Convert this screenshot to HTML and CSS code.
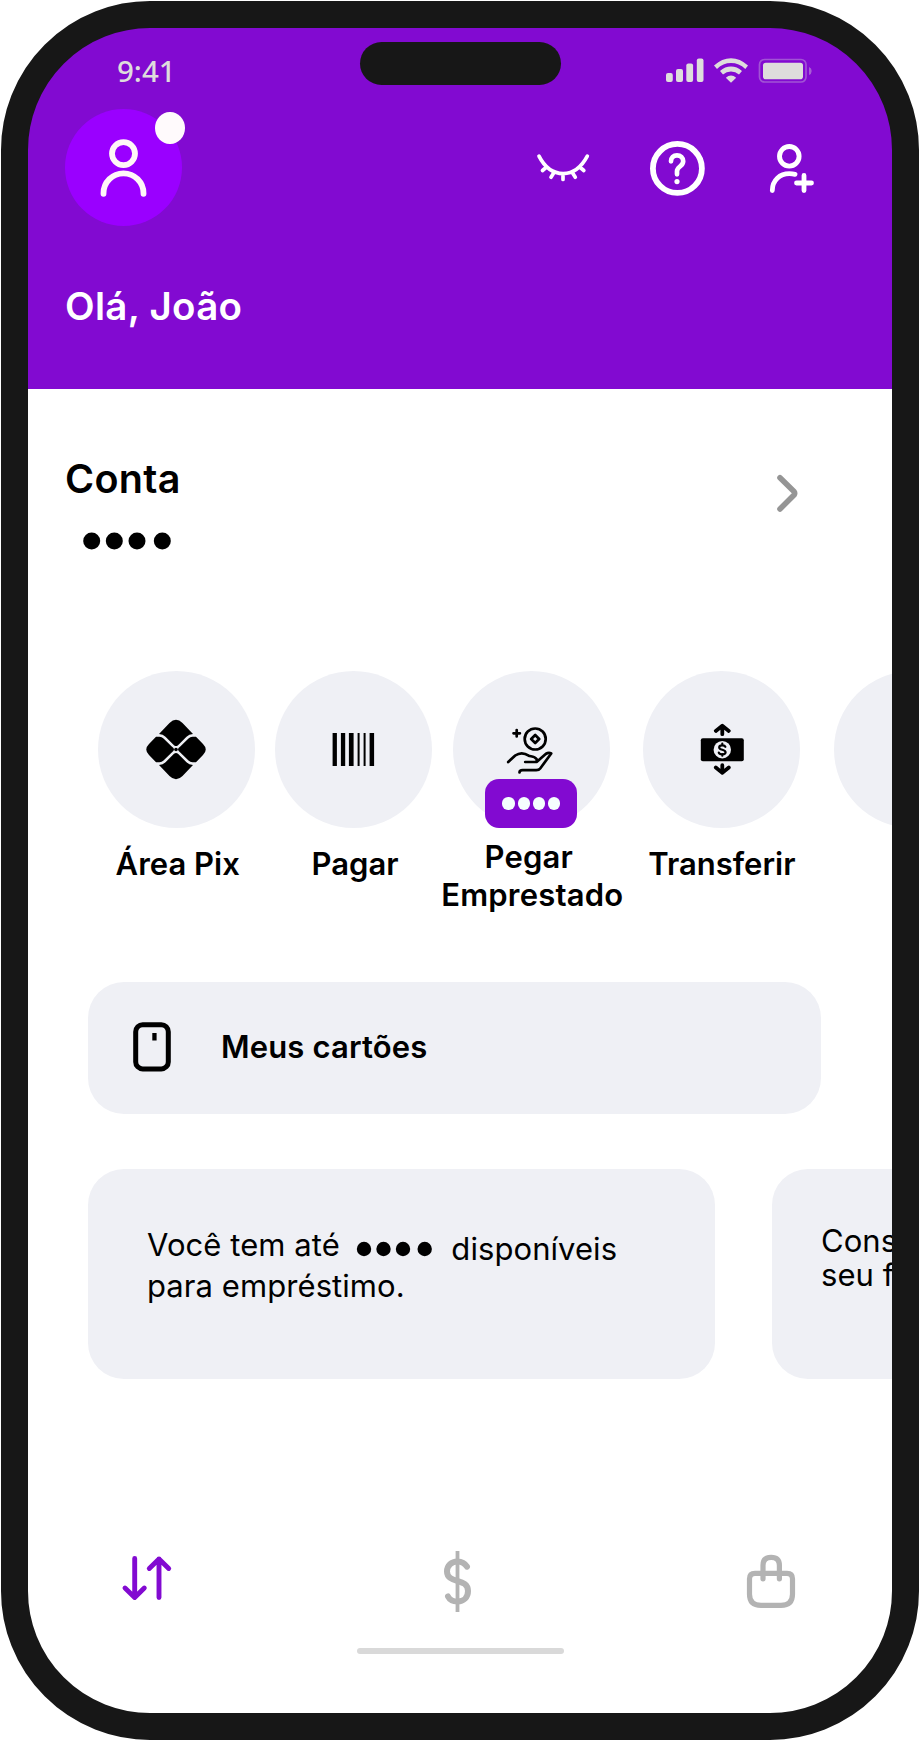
FILE: index.html
```html
<!DOCTYPE html>
<html lang="pt-BR">
<head>
<meta charset="utf-8">
<title>Conta</title>
<link rel="stylesheet" href="styles.css">
</head>
<body>
<main class="phone">
  <header class="header">
    <div class="status">
      <span class="time">9:41</span>
      <span class="island"></span>
      <svg class="signals" width="148" height="28" viewBox="665 57 148 28" fill="#dedddc">
        <rect x="666" y="73" width="6.8" height="9" rx="2"/><rect x="676" y="69" width="7" height="13" rx="2"/><rect x="686.3" y="63.5" width="6.8" height="18.5" rx="2"/><rect x="696.8" y="58.5" width="6.7" height="23.5" rx="2"/>
        <path d="M714 65.5Q722 58.2 731 58.2T748 65.5L745.3 69Q739 63.1 731 63.1T717 69Z"/>
        <path d="M720 71Q725 66.6 731 66.6T742 71L739 74.6Q735.5 71.5 731 71.5T723 74.6Z"/>
        <path d="M725.8 77.7Q731 73.2 736.2 77.7L731 82.8Z"/>
        <rect x="759.5" y="59.5" width="46.5" height="22.5" rx="5" fill="none" stroke="#dedddc" stroke-opacity=".35" stroke-width="1.7"/>
        <rect x="763" y="62.8" width="40" height="16.4" rx="2.8"/>
        <path d="M809 67Q811.7 68 811.7 71T809 75Z" opacity=".4"/>
      </svg>
    </div>
    <div class="actions">
      <div class="avatar">
        <svg width="60" height="60" viewBox="93.8 137.7 60 60" fill="none" stroke="#fff7f7" stroke-width="5.8" stroke-linecap="round"><circle cx="123.3" cy="153.3" r="11.5"/><path d="M103.3 193.5V193A20 20 0 0 1 143.3 193V193.5"/></svg>
        <span class="notice"></span>
      </div>
      <svg class="tools" width="280" height="60" viewBox="535 138 280 60" fill="none" stroke="#fff" stroke-linecap="round" stroke-linejoin="round">
        <path stroke-width="3.7" d="M539 156.2C545 168 554 173.6 563.2 173.6S581 168 587.3 156.2M563 174V179.5M554 172.5L551 177.3M546 167.5L542.5 170.5M572.3 172.5L575.3 177.3M580.3 167.5L583.8 170.5"/>
        <circle cx="677.4" cy="168.4" r="24.5" stroke-width="5.8"/>
        <path stroke-width="4.7" d="M671 161.3C671 157.5 673.5 155.3 677 155.3S683.2 157.8 683.2 161.3C683.2 166.5 677 166.5 677 171.2V174.3"/>
        <circle cx="677" cy="181.6" r="2.6" fill="#fff" stroke="none"/>
        <circle cx="789.3" cy="156.3" r="9.8" stroke-width="4.9"/>
        <path stroke-width="4.8" d="M772.3 190.5C772.3 180 780 173.7 789.3 173.7Q792.5 173.7 795 174.4M796.5 183H811.5M804 175.5V190.5"/>
      </svg>
    </div>
    <h1 class="greeting">Olá, João</h1>
  </header>

  <section class="account">
    <div>
      <h2 class="title">Conta</h2>
      <svg class="mask" width="90" height="18" viewBox="82 532.3 90 18"><circle cx="91.7" cy="541.3" r="8.5"/><circle cx="114.3" cy="541.3" r="8.5"/><circle cx="137" cy="541.3" r="8.5"/><circle cx="162.3" cy="541.3" r="8.5"/></svg>
    </div>
    <svg class="chevron" width="26" height="42" viewBox="774 472 26 42" fill="none" stroke="#959595" stroke-width="5.6" stroke-linecap="round" stroke-linejoin="round"><path d="M780 477.7L794 491.5Q795.3 493.2 794 495L780 509"/></svg>
  </section>

  <nav class="shortcuts">
    <div class="shortcut">
      <div class="disc"><svg width="62" height="62" viewBox="-31 -30.5 62 62"><path d="M-17 -15.5L-6.5 -26.5Q0 -33 6.5 -26.5L17 -15.5Q13 -15.2 10.5 -12.7L2 -4.3Q0 -2.5 -2 -4.3L-10.5 -12.7Q-13 -15.2 -17 -15.5ZM-17 15.5L-6.5 26.5Q0 33 6.5 26.5L17 15.5Q13 15.2 10.5 12.7L2 4.3Q0 2.5 -2 4.3L-10.5 12.7Q-13 15.2 -17 15.5ZM-20 -12.8H-16.5Q-14.2 -12.8 -12.5 -11L-4 -2.7Q0 0 -4 2.7L-12.5 11Q-14.2 12.8 -16.5 12.8H-20L-27 5.5Q-32.5 0 -27 -5.5ZM20 -12.8H16.5Q14.2 -12.8 12.5 -11L4 -2.7Q0 0 4 2.7L12.5 11Q14.2 12.8 16.5 12.8H20L27 5.5Q32.5 0 27 -5.5Z"/><circle r="1.8"/></svg></div>
      <span class="label nudge">Área Pix</span>
    </div>
    <div class="shortcut">
      <div class="disc"><svg width="42" height="34" viewBox="332.4 733 42 34"><path d="M333 733h4.3v33h-4.3zM341.3 733h4.3v33h-4.3zM349.3 733h4.7v33h-4.7zM358 733h2v33h-2zM364 733h2v33h-2zM370 733h4.5v33h-4.5z"/></svg></div>
      <span class="label nudge">Pagar</span>
    </div>
    <div class="shortcut borrow">
      <div class="disc"><svg width="50" height="50" viewBox="505.8 724.5 50 50" fill="none" stroke="#000" stroke-width="2.7" stroke-linecap="round" stroke-linejoin="round"><circle cx="535" cy="738.5" r="10.5"/><path d="M535 734.5L539 738.5L535 742.5L531 738.5ZM516.5 729.5V736M513.3 732.8H519.7M508 761.5L515 755C520 751.5 525 752.8 528.5 755.2C530.5 756.2 534 755 536.5 758.8V761.5H525M537 761L545.5 753.5Q548.5 751.6 551 753L540 768Q538.8 769.7 536 769.7H522.5Q519.3 769.7 519.3 772"/></svg>
        <span class="badge"><i></i><i></i><i></i><i></i></span></div>
      <span class="label two"><span class="first-line">Pegar</span><br>Emprestado</span>
    </div>
    <div class="shortcut transfer">
      <div class="disc"><svg width="44" height="54" viewBox="700.2 723.8 44 54"><rect x="701" y="739" width="43" height="23" rx="2"/><circle cx="722.5" cy="750.5" r="8.7" fill="#eff0f5"/><path fill="none" stroke="#000" stroke-width="3.8" stroke-linecap="round" stroke-linejoin="round" d="M716 731.7L722.5 726.5L729 731.7M722.5 728V735M716 768.3L722.5 773.7L729 768.3M722.5 772V766"/><path fill="none" stroke="#000" stroke-width="2.2" stroke-linecap="round" d="M725.6 747.6C725 745.8 719.4 745.6 719.4 748.2C719.4 751.2 725.8 749.8 725.8 753C725.8 755.8 719.6 755.6 719 753.4M722.5 744.5V746M722.5 755V756.5"/></svg></div>
      <span class="label">Transferir</span>
    </div>
    <div class="shortcut last"><div class="disc"></div></div>
  </nav>

  <section class="cards">
    <svg width="38" height="50" viewBox="0 0 38 50"><rect x="2.7" y="2.7" width="32.6" height="44.2" rx="7" fill="none" stroke="#000" stroke-width="5"/><path d="M19.3 11h4.3v7.5h-4.3z"/></svg>
    <span class="cards-name">Meus cartões</span>
  </section>

  <section class="offers">
    <article class="offer">
      <p class="row"><span>Você tem até</span><svg width="76" height="16" viewBox="356 1241 76 16"><circle cx="364" cy="1249" r="7.2"/><circle cx="383.5" cy="1249" r="7.2"/><circle cx="403" cy="1249" r="7.2"/><circle cx="424.7" cy="1249" r="7.2"/></svg><span class="available">disponíveis</span></p>
      <p class="row second">para empréstimo.</p>
    </article>
    <article class="offer next"><p>Cons</p><p>seu f</p></article>
  </section>

  <footer class="tabs">
    <svg class="tab-swap" width="54" height="50" viewBox="120 1553 54 50" fill="none" stroke="#820ad1" stroke-width="4.9" stroke-linecap="round" stroke-linejoin="round"><path d="M134.7 1558.5V1597.5M125 1588L134.7 1597.5L144.3 1588M159 1597.5V1559M149.3 1568.5L159 1559L168.7 1568.5"/></svg>
    <svg class="tab-money" width="30" height="62" viewBox="443 1551 30 62" fill="none" stroke="#b3b3b3" stroke-width="6" stroke-linecap="round"><path d="M467 1566.7C465 1563.5 461.5 1561.5 457.5 1561.5C451.5 1561.5 447 1565.5 447 1571.5C447 1584 468 1577.5 468 1591C468 1597.5 463.5 1601.5 457.5 1601.5C453 1601.5 449.5 1599.5 448 1596.5"/><path stroke-width="3.8" stroke-linecap="butt" d="M457.5 1551V1612"/></svg>
    <svg class="tab-bag" width="50" height="56" viewBox="746 1553.7 50 56" fill="none" stroke="#b3b3b3" stroke-width="5.2" stroke-linecap="round"><path d="M755 1573H787Q792.5 1573 792.5 1578.5V1594Q792.5 1605 781 1605H761Q749.5 1605 749.5 1594V1578.5Q749.5 1573 755 1573ZM763 1578.5V1565Q763 1557 771.2 1557T779.4 1565V1578.5"/></svg>
  </footer>
  <div class="home"></div>
</main>
</body>
</html>
```
FILE: styles.css
```css
* { box-sizing: border-box; }
body { margin: 0; background: #fff; font-family: Inter, "Liberation Sans", sans-serif; color: #000; }
svg { display: block; flex: none; overflow: visible; }
h1, h2, p { margin: 0; white-space: nowrap; }
.phone { width: 918px; height: 1739px; margin: 1px 0 0 1px; border: 27px solid #171717; border-radius: 149px; background: linear-gradient(#820ad1 361px, #fff 361px); overflow: hidden; }
.header { height: 361px; }
.status { height: 81px; display: flex; padding: 14px 0 0 89px; }
.time { width: 243px; flex: none; margin-top: 8px; font: 500 29.5px/41px "Noto Sans", sans-serif; color: #dedddc; }
.island { width: 201px; flex: none; height: 43px; border-radius: 22px; background: #171717; }
.signals { margin: 15px 0 0 104px; }
.actions { display: flex; height: 117px; padding-left: 37px; }
.avatar { width: 117px; height: 117px; border-radius: 50%; background: #9a00ff; position: relative; display: flex; align-items: center; justify-content: center; }
.notice { position: absolute; left: 90px; top: 2.5px; width: 30px; height: 32.5px; border-radius: 50%; background: #fffafc; }
.tools { margin: 29px 0 0 353px; }
.greeting { padding-left: 37px; margin-top: 56px; font-size: 38.5px; line-height: 48px; font-weight: 600; letter-spacing: .3px; color: #fff; }
.account { height: 282px; display: flex; justify-content: space-between; padding: 66px 92px 0 37px; }
.title { font-size: 39.5px; line-height: 48px; font-weight: 600; letter-spacing: .3px; }
.mask { margin: 29px 0 0 17px; }
.chevron { margin-top: 17px; }
.shortcuts { height: 311px; display: flex; padding-left: 69.7px; gap: 20.3px; }
.shortcut { width: 157px; flex: none; display: flex; flex-direction: column; align-items: center; }
.borrow { margin-left: .5px; }
.disc { width: 157px; height: 157px; border-radius: 50%; background: #eff0f5; display: flex; align-items: center; justify-content: center; position: relative; }
.transfer, .last { margin-left: 13.3px; }
.label { margin-top: 17px; font-size: 31px; line-height: 38px; font-weight: 600; white-space: nowrap; text-align: center; }
.label.nudge { padding-left: 3px; }
.label.two { margin-top: 10px; padding-left: 2px; letter-spacing: .2px; }
.first-line { padding-right: 7px; }
.badge { position: absolute; left: 32px; top: 108px; width: 92px; height: 49px; border-radius: 14px; background: #820ad1; display: flex; align-items: center; justify-content: center; gap: 3px; padding-left: 1px; }
.badge i { width: 12.2px; height: 12.2px; border-radius: 50%; background: #f5fffe; }
.cards { width: 733px; height: 131.5px; margin-left: 60px; border-radius: 36px; background: #eff0f5; display: flex; align-items: center; padding-left: 45px; gap: 50px; font-size: 31px; font-weight: 600; letter-spacing: .15px; }
.cards svg { margin-top: -2px; }
.cards-name { margin-top: -2px; }
.offers { display: flex; gap: 57px; margin: 55.5px 0 0 60px; }
.offer { width: 627px; height: 209.5px; flex: none; border-radius: 36px; background: #eff0f5; padding: 51px 0 0 59px; font-size: 31px; line-height: 41px; font-weight: 400; letter-spacing: .07px; }
.row { display: flex; align-items: center; }
.row svg { margin: 8px 19.5px 0 16px; }
.available { padding-top: 8px; }
.row.second { margin-top: -4px; }
.next { padding: 55px 0 0 49px; line-height: 34px; }
.tabs { display: flex; justify-content: space-between; align-items: center; margin-top: 172px; padding: 0 96px 0 92px; height: 62px; }
.tab-swap { margin-bottom: 7px; }
.tab-money { margin-right: 4px; }
.home { width: 207px; height: 6px; border-radius: 3px; background: #d9d9d9; margin: 35.5px 0 0 329px; }
```
